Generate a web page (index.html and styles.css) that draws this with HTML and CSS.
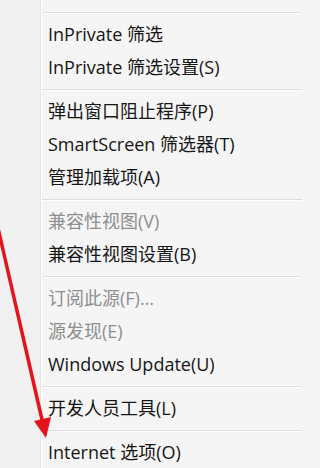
FILE: index.html
```html
<!DOCTYPE html>
<html lang="zh-CN">
<head>
<meta charset="utf-8">
<title>Tools menu</title>
<link rel="stylesheet" href="styles.css">
</head>
<body>
<div class="menu">
  <div class="gutter"></div>
  <ul class="items">
    <li class="spacer"></li>
    <li class="sep"></li>
    <li class="item">InPrivate 筛选</li>
    <li class="item">InPrivate 筛选设置(S)</li>
    <li class="sep"></li>
    <li class="item">弹出窗口阻止程序(P)</li>
    <li class="item">SmartScreen 筛选器(T)</li>
    <li class="item">管理加载项(A)</li>
    <li class="sep"></li>
    <li class="item disabled">兼容性视图(V)</li>
    <li class="item">兼容性视图设置(B)</li>
    <li class="sep"></li>
    <li class="item disabled">订阅此源(F)...</li>
    <li class="item disabled">源发现(E)</li>
    <li class="item">Windows Update(U)</li>
    <li class="sep"></li>
    <li class="item">开发人员工具(L)</li>
    <li class="sep"></li>
    <li class="item">Internet 选项(O)</li>
  </ul>
</div>
<svg class="arrow" width="302" height="468" viewBox="0 0 302 468">
  <line x1="-2" y1="228" x2="43" y2="424" stroke="#e3141b" stroke-width="3.5" stroke-linecap="round"/>
  <polygon points="46,438 34,421 51,417" fill="#e3141b"/>
</svg>
</body>
</html>
```
FILE: styles.css
```css
html, body {
  margin: 0;
  padding: 0;
  background: #f5f5f5;
}
body {
  width: 302px;
  height: 468px;
  overflow: hidden;
  position: relative;
  font-family: "Open Sans", "Noto Sans CJK SC", sans-serif;
  font-size: 18px;
  font-weight: 400;
  color: #161616;
}
.menu {
  display: flex;
  height: 468px;
}
.gutter {
  width: 40px;
  flex: none;
  background: #f1f1f1;
  border-right: 1px solid #e4e4e4;
  box-shadow: 1px 0 0 #ffffff;
}
.items {
  list-style: none;
  margin: 0 0 0 1px;
  padding: 0;
  flex: 1;
}
.spacer {
  height: 7px;
}
.item {
  height: 33px;
  line-height: 33px;
  padding-left: 6px;
  white-space: nowrap;
}
.disabled {
  color: #8f8f8f;
}
.sep {
  height: 11px;
  display: flex;
  flex-direction: column;
  justify-content: center;
}
.sep::before {
  content: "";
  display: block;
  height: 1px;
  background: #dedede;
}
.sep::after {
  content: "";
  display: block;
  height: 1px;
  background: #ffffff;
}
.arrow {
  position: absolute;
  left: 0;
  top: 0;
  pointer-events: none;
}
```
